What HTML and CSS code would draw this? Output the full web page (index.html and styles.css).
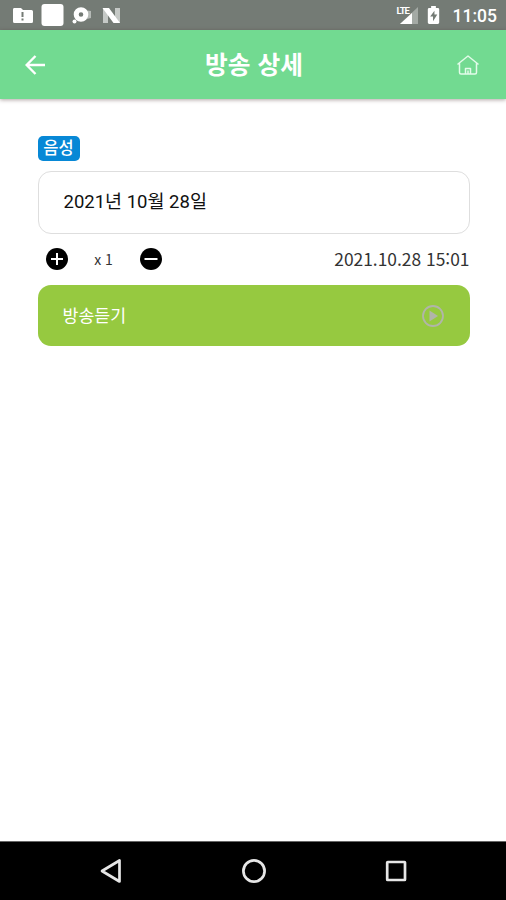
FILE: index.html
```html
<!DOCTYPE html>
<html lang="ko">
<head>
<meta charset="utf-8">
<title>방송 상세</title>
<link rel="stylesheet" href="styles.css">
</head>
<body>
<div class="statusbar">
  <svg class="notifications" viewBox="0 0 124 30" width="124" height="30">
    <path fill="#fff" d="M14 8h7l2 2h8.500q1.500 0 1.500 1.500v10q0 1.500-1.500 1.500h-17q-1.500 0-1.500-1.500v-12q0-1.500 1-1.500z"/>
    <path stroke="#747b75" stroke-width="2" d="M22.500 12v5M22.500 18.500v2"/>
    <rect x="41.500" y="4" width="22" height="22" rx="3" fill="#fff"/>
    <path fill="#b5bab6" d="M84 10l7 1v7l-4 1z"/>
    <circle cx="81" cy="14.500" r="4.800" fill="none" stroke="#fff" stroke-width="5"/>
    <circle cx="74.500" cy="21.500" r="2" fill="#fff"/>
    <path fill="#c5c9c6" d="M103 8h5v15h-5zM115 8h5v15h-5z"/>
    <path fill="#fff" d="M102.500 8h6.500l11 15h-6.500z"/>
  </svg>
  <div class="status-right">
    <div class="signal">
      <span class="lte">LTE</span>
      <svg viewBox="0 0 22 20" width="22" height="20"><path fill="#a4aaa5" d="M22 2v17H4z"/><path fill="#fff" d="M16 8v11H4z"/></svg>
    </div>
    <svg class="battery" viewBox="0 0 13 19" width="13" height="18"><path fill="#fff" d="M4 0h5v2h2q1.500 0 1.500 1.500v14q0 1.500-1.500 1.500h-9q-1.500 0-1.500-1.500v-14q0-1.500 1.500-1.500h2z"/><path fill="#747b75" d="M7.500 5L3 11h3v5l4.500-7h-3z"/></svg>
    <span class="clock">11:05</span>
  </div>
</div>
<header class="appbar">
  <svg viewBox="0 0 20 20" width="20" height="20" fill="none" stroke="#fff" stroke-width="2.400"><path d="M20 10H2M10.500 1L1.600 10l8.900 9"/></svg>
  <h1 class="title">방송 상세</h1>
  <svg viewBox="0 0 22 20" width="22" height="20" fill="none" stroke="#e2fbe9" stroke-width="1.500" stroke-linecap="round" stroke-linejoin="round"><path d="M1 9L11 1l10 8M2.500 8v9.500q0 1.500 1.500 1.500h14q1.500 0 1.500-1.500V8M8.500 19v-5.500h5V19M11 16v3"/></svg>
</header>
<main class="content">
  <span class="badge">음성</span>
  <div class="date-box">2021년 10월 28일</div>
  <div class="controls">
    <svg viewBox="0 0 22 22" width="22" height="22"><circle cx="11" cy="11" r="11"/><path stroke="#fff" stroke-width="2" d="M5 11h12M11 5v12"/></svg>
    <span class="speed">x 1</span>
    <svg viewBox="0 0 22 22" width="22" height="22"><circle cx="11" cy="11" r="11"/><path stroke="#fff" stroke-width="2" d="M4.500 11h13"/></svg>
    <time class="timestamp">2021.10.28 15:01</time>
  </div>
  <div class="listen">
    <span class="listen-label">방송듣기</span>
    <svg viewBox="0 0 22 22" width="22" height="22"><circle cx="11" cy="11" r="10" fill="none" stroke="#b1b5a9" stroke-width="1.800"/><path fill="#b1b5a9" d="M7.500 5.500l8.500 5.500-8.500 5.500z"/></svg>
  </div>
</main>
<nav class="navbar">
  <svg viewBox="0 0 24 26" width="24" height="26"><path d="M20.500 2.500v21L3 13z"/></svg>
  <svg viewBox="0 0 26 26" width="26" height="26"><circle cx="13" cy="13" r="10.600"/></svg>
  <svg viewBox="0 0 24 26" width="24" height="26"><rect x="3.200" y="4" width="17.800" height="18" rx=".5"/></svg>
</nav>
</body>
</html>
```
FILE: styles.css
```css
* { box-sizing: border-box; }
body {
  margin: 0;
  height: 900px;
  display: flex;
  flex-direction: column;
  background: #fff;
  font-family: "Noto Sans CJK KR", sans-serif;
  color: #111;
  overflow: hidden;
}
svg { display: block; flex: none; }
.statusbar {
  height: 30px;
  flex: none;
  display: flex;
  justify-content: space-between;
  background: #747b75;
  color: #fff;
}
.status-right { display: flex; align-items: center; padding-right: 9px; }
.signal { display: flex; position: relative; width: 22px; margin-right: 9px; }
.lte {
  position: absolute;
  left: 1px;
  top: 1px;
  font: 700 9.500px/9px Roboto, sans-serif;
  letter-spacing: -1px;
}
.signal svg { margin-top: 0; }
.battery { margin-right: 13px; }
.clock { font: 500 17.500px/30px Roboto, sans-serif; padding-top: 2px; }
.appbar {
  height: 69px;
  flex: none;
  display: flex;
  align-items: center;
  justify-content: space-between;
  padding: 0 27px 0 25px;
  background: #72da91;
  box-shadow: 0 1px 4px rgba(60, 30, 30, .4);
}
.title {
  margin: 0;
  padding: 0 0 3px 6px;
  font-size: 24.700px;
  line-height: 36px;
  font-weight: 700;
  color: #fff;
}
.content { flex: 1; display: flex; flex-direction: column; padding: 37px 36.500px 0 37.500px; }
.badge {
  align-self: flex-start;
  width: 42px;
  height: 25px;
  border-radius: 5px;
  background: #0788d6;
  color: #fff;
  font-size: 16.500px;
  line-height: 23px;
  font-weight: 500;
  text-align: center;
}
.date-box {
  height: 63px;
  margin-top: 10px;
  padding-left: 25px;
  border: 1.500px solid #dedede;
  border-radius: 13px;
  font: 18.500px/61px Roboto, "Noto Sans CJK KR", sans-serif;
}
.controls { height: 50px; margin-bottom: 1px; display: flex; align-items: center; padding-left: 8px; }
.speed { width: 72px; padding-bottom: 1px; text-align: center; font-size: 14px; line-height: 22px; color: #333; }
.timestamp { margin-left: auto; padding-bottom: 1px; font-size: 17.400px; line-height: 24px; color: #333; }
.listen {
  height: 61px;
  display: flex;
  align-items: center;
  justify-content: space-between;
  padding: 0 26px 0 25px;
  border-radius: 13px;
  background: #96c940;
  color: #fff;
}
.listen-label { padding-bottom: 3px; font-size: 17.300px; }
.navbar {
  height: 59px;
  flex: none;
  display: flex;
  justify-content: space-between;
  align-items: center;
  padding: 0 98px 0 99px;
  border-top: 1px solid #666;
  background: #000;
}
.navbar svg { fill: none; stroke: #e6e6e6; stroke-width: 2.700; stroke-linejoin: round; }
```
